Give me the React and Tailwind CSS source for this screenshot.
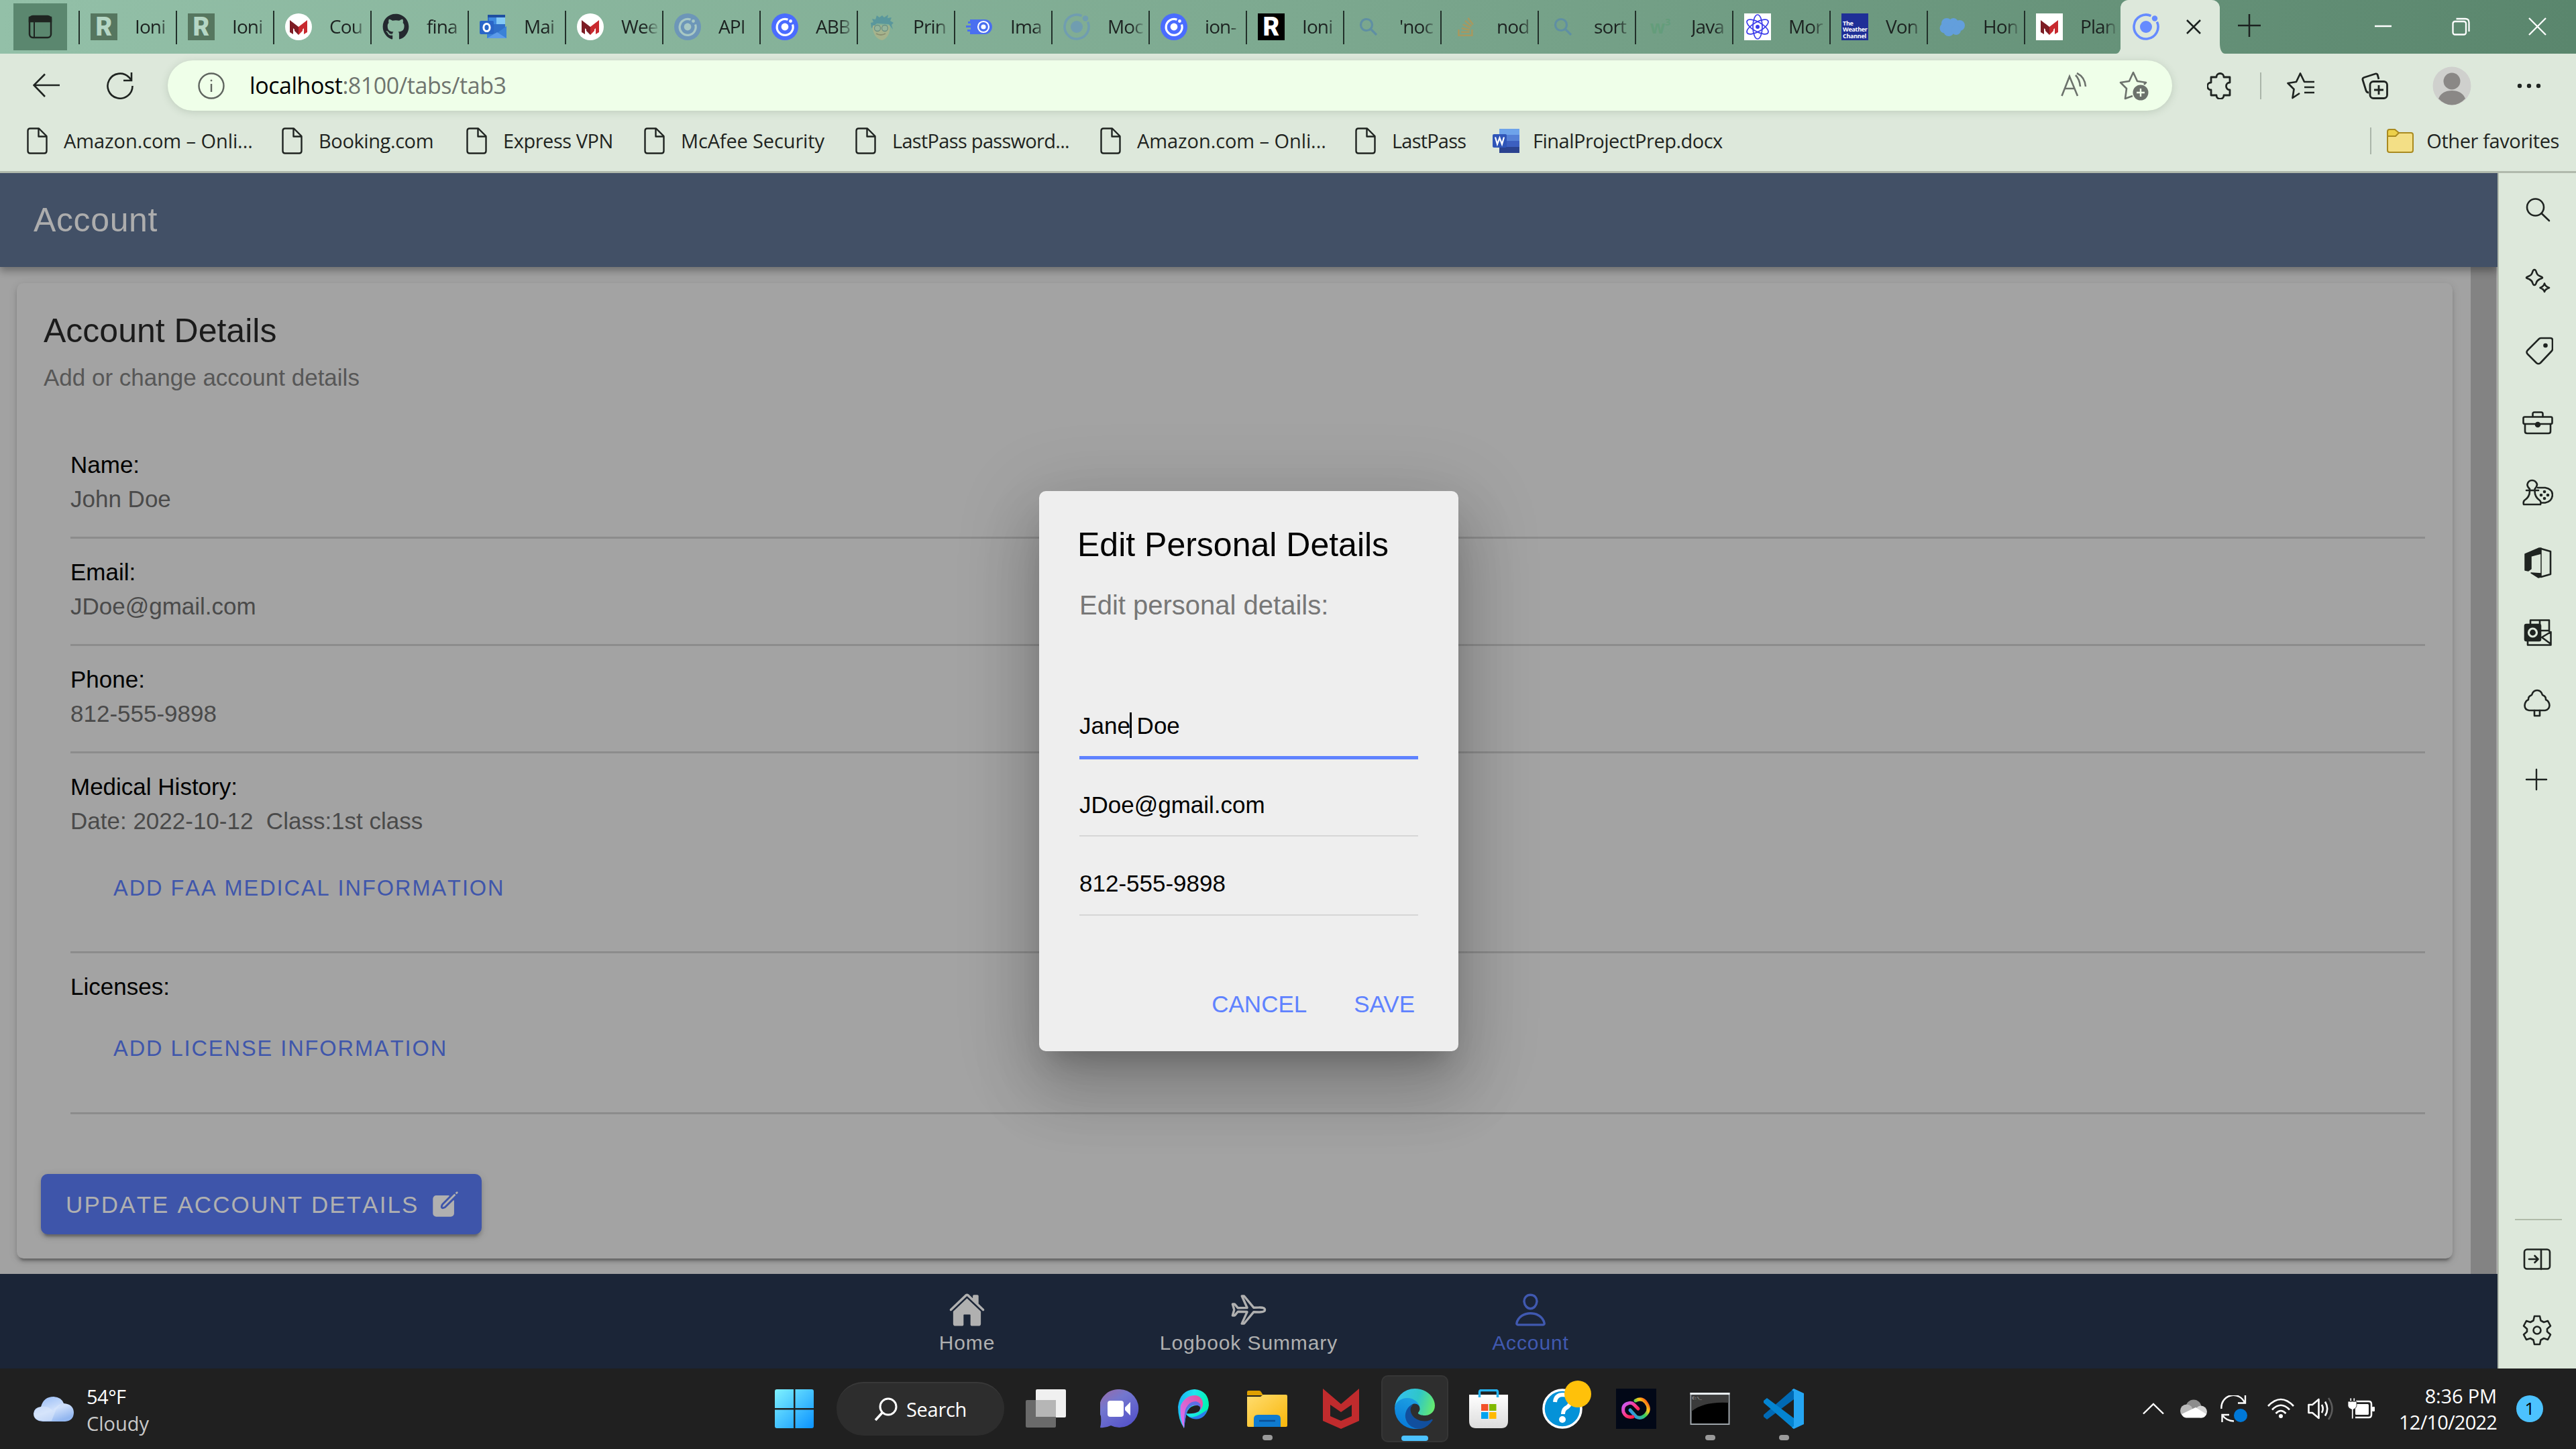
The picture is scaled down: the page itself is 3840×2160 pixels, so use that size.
import { IoHome, IoAirplaneOutline, IoPersonOutline, IoCreate } from "react-icons/io5";
import { FaGithub, FaStackOverflow } from "react-icons/fa";

const SEGOE = "font-['Open_Sans','Noto_Sans',sans-serif]";
const ARIAL = "font-['Liberation_Sans',Arial,sans-serif]";

/* ---------- tab favicons (40 × 40) ---------- */

function LetterR({ box, letter }) {
  return (
    <div className={`flex h-10 w-10 items-center justify-center font-['Roboto',sans-serif] text-[38px] leading-[40px] font-black ${box} ${letter}`}>
      <span className="block">R</span>
    </div>
  );
}

function McAfeeM() {
  return (
    <>
      <path d="M7 10 L20 20 V32 L14 26 V24 L12 22 V31 L7 28 Z" fill="#7d1c24" />
      <path d="M33 10 L20 20 V32 L26 26 V24 L28 22 V31 L33 28 Z" fill="#c8292f" />
    </>
  );
}

function McAfeeCircle() {
  return (
    <svg className="h-10 w-10" viewBox="0 0 40 40">
      <circle cx="20" cy="20" r="20" fill="#fff" />
      <McAfeeM />
    </svg>
  );
}

function McAfeeSquare() {
  return (
    <svg className="h-10 w-10" viewBox="0 0 40 40">
      <rect width="40" height="40" fill="#fff" />
      <McAfeeM />
    </svg>
  );
}

function OutlookFav() {
  return (
    <svg className="h-10 w-10" viewBox="0 0 40 40">
      <rect x="12" y="2" width="26" height="30" fill="#2f6fc9" />
      <rect x="12" y="2" width="26" height="4" fill="#1f4fa0" />
      <rect x="25" y="6" width="13" height="10" fill="#84c9f5" />
      <rect x="14" y="6" width="11" height="10" fill="#3f8ae0" />
      <path d="M40 19 V37 H11 V30 L25 30 Z" fill="#3b82d6" />
      <path d="M11 37 L26 28 L40 37 Z" fill="#5c9bea" />
      <rect x="0" y="11" width="21" height="20" rx="2" fill="#2a66c8" />
      <ellipse cx="10.5" cy="21" rx="4.6" ry="5.6" fill="none" stroke="#fff" strokeWidth="3" />
    </svg>
  );
}

function CapacitorFav({ base, mark }) {
  return (
    <svg className="h-10 w-10" viewBox="0 0 40 40">
      <circle cx="20" cy="20" r="20" fill={base} />
      <path d="M24.5 9.2 A12 12 0 1 0 31.5 16.5" fill="none" stroke={mark} strokeWidth="3.2" />
      <circle cx="20" cy="20" r="5.4" fill={mark} />
      <circle cx="28.5" cy="11.5" r="2.4" fill={mark} />
    </svg>
  );
}

function IonicFav({ color }) {
  return (
    <svg className="h-10 w-10" viewBox="0 0 40 40">
      <path d="M27.5 3.6 A18 18 0 1 0 36.4 12.5" fill="none" stroke={color} strokeWidth="3.6" />
      <circle cx="20" cy="20" r="9" fill={color} />
      <circle cx="33" cy="7.5" r="4.2" fill={color} />
    </svg>
  );
}

function HeadFav() {
  return (
    <svg className="h-10 w-10" viewBox="0 0 40 40">
      <path d="M4 22 L3 14 L7 13 L5 8 L10 9 L12 3 L16 6 L20 3 L23 6 L29 2 L28 7 L34 6 L32 11 L37 14 L34 17 L36 24 L30 16 L12 15 Z" fill="#5a979c" />
      <path d="M6 18 H31 C33 29 27 38 20 40 C12 39 5 30 6 18 Z" fill="#a5b38c" />
      <circle cx="13" cy="22" r="4.5" fill="#94b49c" stroke="#6a8f82" strokeWidth="1.3" />
      <circle cx="24" cy="22" r="4.5" fill="#94b49c" stroke="#6a8f82" strokeWidth="1.3" />
      <path d="M11 30 Q18 34 25 30" fill="none" stroke="#8a8f70" strokeWidth="2" />
    </svg>
  );
}

function IonicSpeedFav() {
  return (
    <svg className="h-10 w-10" viewBox="0 0 40 40">
      <path d="M6 9 H28 A11 11 0 0 1 28 31 H6 V27 H2 V24 H7 V21 H0 V18 H7 V15 H3 V12 H6 Z" fill="#4a6ff0" />
      <circle cx="26" cy="20" r="8" fill="none" stroke="#fff" strokeWidth="2.2" />
      <circle cx="26" cy="20" r="3.6" fill="#fff" />
    </svg>
  );
}

function SearchFav() {
  return (
    <svg className="h-10 w-10" viewBox="0 0 40 40" fill="none" stroke="#5f8fa3" strokeWidth="3.2">
      <circle cx="17" cy="17" r="8.5" />
      <path d="M23 23 L32 32" />
    </svg>
  );
}

function StackFav() {
  return (
    <div className="flex h-10 w-10 items-center justify-center">
      <FaStackOverflow className="h-8 w-8 text-[#a8985f]" />
    </div>
  );
}

function W3Fav() {
  return (
    <div className="flex h-10 w-10 items-center justify-center font-['Open_Sans',sans-serif] text-[26px] font-bold text-[#649d7b]">
      w<sup className="text-[14px]">3</sup>
    </div>
  );
}

function AtomFav() {
  return (
    <svg className="h-10 w-10" viewBox="0 0 40 40" fill="none" stroke="#3b3bea" strokeWidth="1.7">
      <rect width="40" height="40" fill="#fff" stroke="none" />
      <ellipse cx="20" cy="20" rx="18" ry="7" transform="rotate(30 20 20)" />
      <ellipse cx="20" cy="20" rx="18" ry="7" transform="rotate(90 20 20)" />
      <ellipse cx="20" cy="20" rx="18" ry="7" transform="rotate(150 20 20)" />
      <circle cx="20" cy="20" r="3" fill="#3b3bea" stroke="none" />
    </svg>
  );
}

function WeatherFav() {
  return (
    <div className="flex h-10 w-10 flex-col justify-end bg-[#1f2f97] pb-[2px] pl-[2px] font-['Open_Sans',sans-serif] text-[9px] leading-[9.5px] font-bold tracking-[-0.3px] text-white">
      <span>The</span>
      <span>Weather</span>
      <span>Channel</span>
    </div>
  );
}

function CloudFav() {
  return (
    <svg className="h-10 w-10" viewBox="0 0 40 40" fill="#639fdc">
      <circle cx="12" cy="15" r="8" />
      <circle cx="22" cy="14" r="7" />
      <circle cx="31" cy="18" r="8" />
      <circle cx="9" cy="22" r="7.5" />
      <circle cx="15" cy="26" r="8" />
      <circle cx="26" cy="25" r="7" />
    </svg>
  );
}

const TABS = [
  { label: "Ioni", icon: <LetterR box="bg-[#56765f]" letter="text-[#b5d6c4]" /> },
  { label: "Ioni", icon: <LetterR box="bg-[#56765f]" letter="text-[#b5d6c4]" /> },
  { label: "Cou", icon: <McAfeeCircle /> },
  { label: "fina", icon: <FaGithub className="h-10 w-10 text-[#24292f]" /> },
  { label: "Mai", icon: <OutlookFav /> },
  { label: "Wee", icon: <McAfeeCircle /> },
  { label: "API", icon: <CapacitorFav base="#6d96b8" mark="#a8c8c4" /> },
  { label: "ABB", icon: <CapacitorFav base="#4a6cff" mark="#fff" /> },
  { label: "Prin", icon: <HeadFav /> },
  { label: "Ima", icon: <IonicSpeedFav /> },
  { label: "Moc", icon: <IonicFav color="#709db0" /> },
  { label: "ion-", icon: <CapacitorFav base="#4a6cff" mark="#fff" /> },
  { label: "Ioni", icon: <LetterR box="bg-black" letter="text-white" /> },
  { label: "'noc", icon: <SearchFav /> },
  { label: "nod", icon: <StackFav /> },
  { label: "sort", icon: <SearchFav /> },
  { label: "Java", icon: <W3Fav /> },
  { label: "Mor", icon: <AtomFav /> },
  { label: "Von", icon: <WeatherFav /> },
  { label: "Hon", icon: <CloudFav /> },
  { label: "Plan", icon: <McAfeeSquare /> },
];

function TabStrip() {
  return (
    <div className={`flex h-20 bg-linear-to-r from-[#93c0a8] via-[#7da990] to-[#5a866d] ${SEGOE}`}>
      <div className="mt-[5px] ml-5 flex h-[70px] w-20 shrink-0 items-center justify-center bg-[#5b876f]">
        <svg className="h-10 w-10" viewBox="0 0 40 40" fill="none" stroke="#1f2421" strokeWidth="2.5">
          <rect x="4" y="4" width="32" height="32" rx="5" />
          <path d="M4 6 H36 V12 H4 Z" fill="#1f2421" />
          <path d="M11 12 V36" strokeWidth="2" />
        </svg>
      </div>
      <div className="ml-[17px] flex">
        {TABS.map((t, i) => (
          <div key={i} className="flex w-[145px] shrink-0">
            <div className="mt-4 h-[50px] w-[2px] shrink-0 bg-[#22302a]" />
            <div className="mt-5 ml-4 h-10 w-10 shrink-0">{t.icon}</div>
            <div className="ml-[26px] h-20 w-[59px] text-[28px] leading-[78px] tracking-[-0.9px] whitespace-nowrap text-[#1c2220] [mask-image:linear-gradient(to_right,black_60%,rgba(0,0,0,0.15)_92%)]">
              {t.label}
            </div>
          </div>
        ))}
      </div>
      <div className="-ml-2 flex">
        <svg className="h-20 w-2" viewBox="0 0 8 80">
          <path d="M8 64 V80 H0 C5 80 8 74 8 64 Z" fill="#dde8db" />
        </svg>
        <div className="-ml-px flex h-20 w-[148px] items-center rounded-t-[12px] bg-[#dde8db]">
          <div className="ml-[18px] h-10 w-10">
            <IonicFav color="#668bff" />
          </div>
          <svg className="ml-[39px] h-6 w-6" viewBox="0 0 24 24" stroke="#1c2220" strokeWidth="2.5">
            <path d="M2 2 L22 22 M22 2 L2 22" />
          </svg>
        </div>
        <svg className="h-20 w-2" viewBox="0 0 8 80">
          <path d="M0 64 V80 H8 C3 80 0 74 0 64 Z" fill="#dde8db" />
        </svg>
      </div>
      <svg className="mt-5 ml-[18px] h-9 w-9" viewBox="0 0 36 36" stroke="#1c2220" strokeWidth="2.5">
        <path d="M18 1 V35 M1 18 H35" />
      </svg>
      <div className="mt-[26px] mr-[44px] ml-auto flex">
        <svg className="h-[27px] w-[27px]" viewBox="0 0 27 27" stroke="#fff" strokeWidth="2.5">
          <path d="M0 13 H25" />
        </svg>
        <svg className="ml-[88px] h-[27px] w-[27px]" viewBox="0 0 27 27" fill="none" stroke="#fff" strokeWidth="2.3">
          <rect x="1.5" y="6" width="19.5" height="19.5" rx="3" />
          <path d="M6.5 2 H20 Q25.5 2 25.5 7.5 V21" />
        </svg>
        <svg className="ml-[87px] h-[27px] w-[27px]" viewBox="0 0 27 27" stroke="#fff" strokeWidth="2.3">
          <path d="M1 1 L26 26 M26 1 L1 26" />
        </svg>
      </div>
    </div>
  );
}

/* ---------- address bar and favourites ---------- */

function AddressRow() {
  return (
    <div className={`flex h-[95px] items-center ${SEGOE}`}>
      <svg className="ml-[49px] h-10 w-10" viewBox="0 0 40 40" fill="none" stroke="#1f2421" strokeWidth="2.6">
        <path d="M18 2.5 L1.5 19 L18 36 M1.5 19 H40" />
      </svg>
      <svg className="ml-[70px] h-10 w-10" viewBox="0 0 40 40" fill="none" stroke="#1f2421" strokeWidth="2.6">
        <path d="M38.5 20 A18.5 18.5 0 1 1 33 7 L37 11.5 M37 0 V12 H25" />
      </svg>
      <div className="ml-[51px] flex h-[75px] w-[2988px] items-center rounded-full bg-[#efffe9] shadow-[0_2px_12px_rgba(80,110,80,0.22)]">
        <svg className="ml-[45px] h-10 w-10" viewBox="0 0 40 40" fill="none" stroke="#5f655f" strokeWidth="2.4">
          <circle cx="20" cy="20" r="18.5" />
          <path d="M20 17 V29" />
          <circle cx="20" cy="12" r="1" fill="#5f655f" strokeWidth="1" />
        </svg>
        <div className="ml-[37px] text-[34px] leading-[75px] tracking-[-0.45px] text-[#6f756f]">
          <span className="text-black">localhost</span>:8100/tabs/tab3
        </div>
        <svg className="ml-auto h-10 w-10" viewBox="0 0 40 40" fill="none" stroke="#6c726c" strokeWidth="2.6">
          <path d="M1.500 35 L13 6 L25 35 M6 24 H20" />
          <path d="M22 4 Q28 10 29 21 M24 1 Q36 7 37 21" />
        </svg>
        <svg className="mr-[34px] ml-[47px] h-11 w-[45px]" viewBox="0 0 45 44" fill="none" stroke="#6c726c" strokeWidth="2.6">
          <path d="M20 37 L9 41 L11 26 L2 17 L15 15 L21 2 L27 15 L40 17 L37 20" strokeLinejoin="round" />
          <circle cx="32" cy="32" r="11.500" fill="#6c726c" stroke="none" />
          <path d="M32 26 V38 M26 32 H38" stroke="#efffe9" strokeWidth="2.4" />
        </svg>
      </div>
      <svg className="ml-[52px] h-10 w-10" viewBox="0 0 40 40" fill="none" stroke="#1f2421" strokeWidth="2.8" strokeLinejoin="round">
        <path d="M14 7 A5.500 5.500 0 0 1 25 7 H34 V15 A5.500 5.500 0 0 0 34 26 V34 H25 A5.500 5.500 0 0 1 14 34 H6 V26 A5.500 5.500 0 0 1 6 15 V7 Z" />
      </svg>
      <div className="ml-[39px] h-10 w-[2px] bg-[#aab5a9]" />
      <svg className="ml-[38px] h-10 w-[42px]" viewBox="0 0 42 40" fill="none" stroke="#1f2421" strokeWidth="2.7" strokeLinejoin="round">
        <path d="M19 31 L8.500 38 L10.500 25 L1.500 16 L14 14 L20 1.500 L26 14 H41 M26 22 H41 M26 30 H41" />
      </svg>
      <svg className="ml-[69px] h-10 w-10" viewBox="0 0 40 40" fill="none" stroke="#1f2421" strokeWidth="2.8" strokeLinejoin="round">
        <path d="M26 10 L24 3 Q23 1.500 21 2 L4 7.500 Q1.500 8.500 2 11 L7 27 Q8 30 11 30" />
        <rect x="13" y="13.500" width="25.500" height="25" rx="5" />
        <path d="M26 19 V33 M19 26 H33" />
      </svg>
      <svg className="ml-[66px] h-[58px] w-[58px]" viewBox="0 0 58 58">
        <circle cx="29" cy="29" r="28.500" fill="#cfd0cd" />
        <circle cx="29" cy="22" r="12.500" fill="#8a8886" />
        <path d="M9 48 Q14 36 29 36 Q44 36 49 48 Q40 57.500 29 57.500 Q18 57.500 9 48 Z" fill="#8a8886" />
      </svg>
      <svg className="ml-[66px] h-10 w-10" viewBox="0 0 40 40" fill="#1f2421">
        <circle cx="6" cy="20" r="3.200" />
        <circle cx="20" cy="20" r="3.200" />
        <circle cx="34" cy="20" r="3.200" />
      </svg>
    </div>
  );
}

const BOOKMARKS = [
  ["Amazon.com – Onli...", "w-[380px] tracking-[-0.08px]"],
  ["Booking.com", "w-[275px] tracking-[-0.4px]"],
  ["Express VPN", "w-[265px] tracking-[-0.45px]"],
  ["McAfee Security", "w-[315px] tracking-[-0.15px]"],
  ["LastPass password...", "w-[365px] tracking-[-0.7px]"],
  ["Amazon.com – Onli...", "w-[380px] tracking-[-0.08px]"],
  ["LastPass", "w-[205px] tracking-[-0.8px]"],
];

function DocIcon() {
  return (
    <svg className="h-10 w-8" viewBox="0 0 32 40" fill="none" stroke="#1f2421" strokeWidth="2.4" strokeLinejoin="round">
      <path d="M5 1.500 H18 L29.500 13 V35 Q29.500 38.500 26 38.500 H5 Q1.500 38.500 1.500 35 V5 Q1.500 1.500 5 1.500 Z" />
      <path d="M17.500 2 V13.500 H29" />
    </svg>
  );
}

function FavouritesRow() {
  return (
    <div className={`flex h-[83px] border-b-[3px] border-[#b0b9ac] pb-[10px] pl-10 text-[29px] leading-[68px] text-[#1f2421] ${SEGOE}`}>
      {BOOKMARKS.map(([label, cls], i) => (
        <div key={i} className={`flex shrink-0 items-center whitespace-nowrap ${cls}`}>
          <DocIcon />
          <span className="ml-[23px]">{label}</span>
        </div>
      ))}
      <div className="flex items-center tracking-[-0.5px]">
        <svg className="h-10 w-10" viewBox="0 0 40 40">
          <rect x="10" y="2" width="30" height="9" fill="#6ea3ea" />
          <rect x="10" y="11" width="30" height="9" fill="#5580d6" />
          <rect x="10" y="20" width="30" height="9" fill="#3c5fc0" />
          <rect x="10" y="29" width="30" height="9" fill="#2a428f" />
          <rect x="0" y="10" width="21" height="20" rx="2" fill="#2f55b8" />
          <path d="M4 14.500 L7 25 L10.500 15.500 L14 25 L17 14.500" fill="none" stroke="#fff" strokeWidth="2.200" />
        </svg>
        <span className="ml-[20px]">FinalProjectPrep.docx</span>
      </div>
      <div className="mr-[25px] ml-auto flex items-center tracking-[-0.4px]">
        <div className="h-10 w-[2px] bg-[#aab5a9]" />
        <svg className="ml-[22px] h-10 w-[42px]" viewBox="0 0 42 40" stroke="#a98a1f" strokeWidth="2">
          <path d="M2 8 H37 Q40 8 40 11 V34 Q40 37 37 37 H5 Q2 37 2 34 Z" fill="#f3df86" />
          <path d="M2 6 Q2 3 5 3 H13 L19 8 L14 13 H2 Z" fill="#ecd04a" />
        </svg>
        <span className="ml-[18px]">Other favorites</span>
      </div>
    </div>
  );
}

/* ---------- account page ---------- */

const FIELDS = [
  ["Name:", "John Doe"],
  ["Email:", "JDoe@gmail.com"],
  ["Phone:", "812-555-9898"],
];

function AccountCard() {
  return (
    <div className="mt-6 ml-[25px] h-[1454px] w-[3631px] shrink-0 rounded-[10px] bg-[#a3a3a3] pt-[41px] shadow-[0_8px_3px_-5px_rgba(0,0,0,0.2),0_5px_5px_rgba(0,0,0,0.14),0_3px_13px_rgba(0,0,0,0.12)]">
      <div className="ml-10 text-[50px] leading-[60px] text-[#1b1b1b]">Account Details</div>
      <div className="mt-[19px] ml-10 text-[35px] leading-[42px] text-[#575757]">Add or change account details</div>
      <div className="mt-[59px] ml-20 w-[3510px] text-[35px] leading-[51px]">
        {FIELDS.map(([label, value]) => (
          <div key={label} className="h-40 border-b-[3px] border-[#8c8c8c] pt-6">
            <div className="text-black">{label}</div>
            <div className="text-[#4a4a4a]">{value}</div>
          </div>
        ))}
        <div className="h-[298px] border-b-[3px] border-[#8c8c8c] pt-6">
          <div className="text-black">Medical History:</div>
          <div className="whitespace-pre text-[#4a4a4a]">{"Date: 2022-10-12  Class:1st class"}</div>
          <div className="mt-[55px] ml-[64px] text-[32.5px] leading-10 tracking-[0.06em] text-[#3f56ab] [font-kerning:none]">ADD FAA MEDICAL INFORMATION</div>
        </div>
        <div className="h-60 border-b-[3px] border-[#8c8c8c] pt-6">
          <div className="text-black">Licenses:</div>
          <div className="mt-[47px] ml-[64px] text-[32.5px] leading-10 tracking-[0.06em] text-[#3f56ab] [font-kerning:none]">ADD LICENSE INFORMATION</div>
        </div>
      </div>
      <div className="mt-[89px] ml-9 flex h-[90px] w-[657px] items-center rounded-[10px] bg-[#3e55aa] text-[35px] leading-[91px] tracking-[0.06em] text-[#b0b0b0] shadow-[0_8px_3px_-5px_rgba(0,0,0,0.2),0_5px_5px_rgba(0,0,0,0.14),0_3px_13px_rgba(0,0,0,0.12)]">
        <span className="ml-[37px] whitespace-nowrap [font-kerning:none]">UPDATE ACCOUNT DETAILS</span>
        <IoCreate className="ml-[16px] h-[46px] w-[46px]" />
      </div>
    </div>
  );
}

function EditDialog() {
  return (
    <div className="absolute top-[474px] left-[1549px] flex h-[835px] w-[625px] flex-col rounded-[10px] bg-[#eeeeee] pl-[57px] text-[35px] text-black shadow-[0_28px_38px_-18px_rgba(0,0,0,0.2),0_60px_95px_8px_rgba(0,0,0,0.14),0_22px_115px_20px_rgba(0,0,0,0.12)]">
      <div className="mt-[50px] text-[50px] leading-[60px]">Edit Personal Details</div>
      <div className="mt-[35px] ml-[3px] text-[40px] leading-[50px] text-[#777777]">Edit personal details:</div>
      <div className="mt-[102px] ml-[3px] w-[505px]">
        <div className="relative h-[103px] border-b-[5px] border-[#5f82ff] pt-[33px] leading-10">
          Jane Doe
          <div className="absolute top-[33px] left-[75px] h-[38px] w-[3px] bg-black" />
        </div>
        <div className="h-[115px] border-b-2 border-[#d6d6d6] pt-[48px] leading-10">JDoe@gmail.com</div>
        <div className="h-[118px] border-b-2 border-[#d6d6d6] pt-[50px] leading-10">812-555-9898</div>
      </div>
      <div className="mt-[112px] mr-[65px] flex justify-end gap-[70px] leading-10 text-[#5f82ff]">
        <span>CANCEL</span>
        <span>SAVE</span>
      </div>
    </div>
  );
}

function AppTabBar() {
  return (
    <div className="relative flex h-[141px] justify-center bg-[#1b2537] text-[30px] leading-9 tracking-[0.03em] text-[#b0b0b0]">
      <div className="flex w-[420px] flex-col items-center pt-[26px]">
        <IoHome className="h-[55px] w-[55px]" />
        <span className="mt-[4px]">Home</span>
      </div>
      <div className="flex w-[420px] flex-col items-center pt-[26px]">
        <IoAirplaneOutline className="h-[55px] w-[55px]" />
        <span className="mt-[4px]">Logbook Summary</span>
      </div>
      <div className="flex w-[420px] flex-col items-center pt-[26px] text-[#4059b0]">
        <IoPersonOutline className="h-[55px] w-[55px]" />
        <span className="mt-[4px]">Account</span>
      </div>
    </div>
  );
}

function AccountApp() {
  return (
    <div className={`relative flex w-[3723px] shrink-0 flex-col overflow-hidden bg-[#a2a2a2] ${ARIAL}`}>
      <div className="relative z-10 h-[140px] shrink-0 bg-[#425066] pl-[50px] text-[50px] leading-[140px] tracking-[0.0125em] text-[#adadad] shadow-[0_5px_10px_rgba(0,0,0,0.25),0_10px_12px_rgba(0,0,0,0.08)]">
        Account
      </div>
      <div className="flex h-[1501px]">
        <AccountCard />
        <div className="mr-[2px] ml-auto w-[38px] bg-[#838383]" />
      </div>
      <AppTabBar />
      <EditDialog />
    </div>
  );
}

/* ---------- browser sidebar ---------- */

function SideIcon({ gap, h, w = 46, children }) {
  return (
    <svg
      className="shrink-0"
      style={{ marginTop: gap, height: h, width: w }}
      viewBox={`0 0 ${w} ${h}`}
      fill="none"
      stroke="#1f2421"
      strokeWidth="2.6"
      strokeLinejoin="round"
      strokeLinecap="round"
    >
      {children}
    </svg>
  );
}

function Sidebar() {
  return (
    <div className="flex flex-1 flex-col border-l-2 border-[#b3bcae] bg-[#dde8db] pl-[35px]">
      <SideIcon gap={37} h={36}>
        <circle cx="19.500" cy="14" r="12.500" />
        <path d="M28.500 23 L40 34" />
      </SideIcon>
      <SideIcon gap={69} h={38}>
        <path d="M18 2 Q20 2 21 6 Q22 10 26 11.500 Q30 13 30 14 Q30 15 26 16 Q22 18 21 21 Q20 25 18 25 Q16 25 15 21 Q14 18 10 16 Q6 15 6 14 Q6 13 10 11.500 Q14 10 15 6 Q16 2 18 2 Z" />
        <path d="M33 22.500 Q34 27 40 29 Q34 31 33 35 Q32 31 26.500 29 Q32 27 33 22.500 Z" />
      </SideIcon>
      <SideIcon gap={63} h={44}>
        <path d="M25 4 Q26 3 28 3 H42 Q45 3 45 6 V19 Q45 21 43.500 22.500 L27 40 Q24 42.500 21 40 L8 27 Q5 24 8 21 Z" />
        <circle cx="34.500" cy="14" r="2" fill="#1f2421" />
      </SideIcon>
      <SideIcon gap={68} h={36}>
        <rect x="1.500" y="8.500" width="43" height="10.500" rx="2" />
        <path d="M4 19 V30 Q4 33 7 33 H39 Q42 33 42 30 V19 M15.500 8 V4 Q15.500 1.500 18 1.500 H28 Q30.500 1.500 30.500 4 V8" />
        <circle cx="23" cy="20" r="3" fill="#1f2421" />
      </SideIcon>
      <SideIcon gap={65} h={40}>
        <path d="M11 15 Q7 11 7.500 8 Q9 2 14.500 2 Q20 2 22 8 Q22 11 18.500 15 M6 17 H24 M11 18 Q11 27 3 32 Q1 34 2 38 H27 Q28.500 34 26 32 Q18.500 27 18.500 18" />
        <path d="M23 13 H34 Q45 15 45 24 Q44 34 34 35.500 H29" />
        <g fill="#1f2421" stroke="none">
          <circle cx="33" cy="19" r="2.300" />
          <circle cx="28" cy="24" r="2.300" />
          <circle cx="38" cy="24" r="2.300" />
          <circle cx="33" cy="29" r="2.300" />
        </g>
      </SideIcon>
      <SideIcon gap={61} h={48}>
        <path d="M25 2 L4 11 V35 L9 36 L13 33 V14 L28 10 V40 L13 39 L24 46 L28 45 V2 Z" fill="#1f2421" strokeWidth="1.500" />
        <path d="M28 3 L42 7 V41 L28 45" />
      </SideIcon>
      <SideIcon gap={59} h={42}>
        <path d="M12 9 V2.500 H40 V19 M8 33 V39.500 H42.500 V20 L29 28 L42.500 38 M27 18 H40 M26 3 V9" />
        <rect x="4" y="9" width="23" height="24" rx="2" fill="#1f2421" />
        <circle cx="15.500" cy="21" r="6" stroke="#dde8db" strokeWidth="3.200" />
      </SideIcon>
      <SideIcon gap={63} h={42}>
        <path d="M10 32 Q3.500 31 3.500 24.500 Q4 18 9 16 Q8.500 11 14 9 Q16 2 22 2 Q28 2 30 9 Q35.500 11 35 16 Q40 18 40.500 24.500 Q40 31 34 32 Z" />
        <path d="M18 32 V40 H26 V32" />
      </SideIcon>
      <SideIcon gap={76} h={34}>
        <path d="M21 2 V32 M6 17 H36" strokeWidth="2.400" />
      </SideIcon>
      <div className="mt-auto -ml-[11px] h-[2px] w-[70px] bg-[#b0bba9]" />
      <SideIcon gap={42} h={34}>
        <rect x="3" y="1.500" width="38" height="29" rx="4" />
        <path d="M28 2 V31 M10 16 H23 M18.500 11 L23.500 16 L18.500 21" />
      </SideIcon>
      <SideIcon gap={64} h={48}>
        <path
          transform="translate(-2 0)"
          d="M20 3 H28 L29.500 9.500 L34 12 L40 10 L44 17.500 L39 22 V26 L44 30.500 L40 38 L34 36 L29.500 38.500 L28 45 H20 L18.500 38.500 L14 36 L8 38 L4 30.500 L9 26 V22 L4 17.500 L8 10 L14 12 L18.500 9.500 Z"
        />
        <circle cx="22" cy="24" r="5.500" />
      </SideIcon>
      <div className="h-[33px] shrink-0" />
    </div>
  );
}

/* ---------- taskbar ---------- */

function Slot({ children, dot, active }) {
  return (
    <div className="flex w-[110px] justify-center">
      <div className={active ? "relative flex h-[100px] w-[100px] items-center justify-center rounded-[10px] border-2 border-[#363636] bg-[#2e2e2e]" : "relative flex h-[100px] w-[100px] items-center justify-center"}>
        {children}
        {active && <div className="absolute bottom-0 left-7 h-2 w-10 rounded-full bg-[#4cc2ff]" />}
        {dot && <div className="absolute bottom-[3px] left-[43px] h-2 w-[15px] rounded-full bg-[#9a9a9a]" />}
      </div>
    </div>
  );
}

function Defs() {
  return (
    <svg className="absolute h-0 w-0">
      <defs>
        <linearGradient id="win" x1="0" y1="0" x2="58" y2="58" gradientUnits="userSpaceOnUse">
          <stop offset="0" stopColor="#7ff2ff" />
          <stop offset="1" stopColor="#0b93ff" />
        </linearGradient>
        <linearGradient id="chat" x1="0" y1="0" x2="0.700" y2="1">
          <stop offset="0" stopColor="#9a6aa5" />
          <stop offset="0.400" stopColor="#7377cf" />
          <stop offset="1" stopColor="#5553c9" />
        </linearGradient>
        <linearGradient id="folder" x1="0" y1="0" x2="1" y2="1">
          <stop offset="0" stopColor="#ffdd70" />
          <stop offset="1" stopColor="#f9b60a" />
        </linearGradient>
        <linearGradient id="edgeTop" x1="0" y1="0.400" x2="1" y2="0.600">
          <stop offset="0" stopColor="#35c1f1" />
          <stop offset="0.550" stopColor="#2fc6c9" />
          <stop offset="1" stopColor="#66eb6e" />
        </linearGradient>
        <linearGradient id="edgeMid" x1="0.600" y1="0.100" x2="0.300" y2="1">
          <stop offset="0" stopColor="#1b9de2" />
          <stop offset="1" stopColor="#0678d7" />
        </linearGradient>
        <linearGradient id="peOut" x1="0" y1="0" x2="1" y2="0.300">
          <stop offset="0" stopColor="#1aa7f5" />
          <stop offset="0.500" stopColor="#1fe6ee" />
          <stop offset="1" stopColor="#00f5b0" />
        </linearGradient>
        <linearGradient id="peIn" x1="0" y1="1" x2="1" y2="0">
          <stop offset="0" stopColor="#d673ff" />
          <stop offset="1" stopColor="#e0559c" />
        </linearGradient>
        <linearGradient id="ccL" x1="0" y1="0" x2="1" y2="1">
          <stop offset="0" stopColor="#c55cff" />
          <stop offset="0.500" stopColor="#ff3a8a" />
          <stop offset="1" stopColor="#ff1020" />
        </linearGradient>
        <linearGradient id="ccR" x1="0" y1="0.800" x2="1" y2="0">
          <stop offset="0" stopColor="#2f8bff" />
          <stop offset="0.450" stopColor="#35d05a" />
          <stop offset="0.700" stopColor="#ffc61a" />
          <stop offset="1" stopColor="#ff2a10" />
        </linearGradient>
        <linearGradient id="cloud" x1="0" y1="0" x2="0.600" y2="1">
          <stop offset="0" stopColor="#8fb6f5" />
          <stop offset="0.600" stopColor="#cfe0fb" />
          <stop offset="1" stopColor="#93b7f0" />
        </linearGradient>
        <linearGradient id="store" x1="0" y1="0" x2="0" y2="1">
          <stop offset="0" stopColor="#ffffff" />
          <stop offset="1" stopColor="#dcdcdc" />
        </linearGradient>
      </defs>
    </svg>
  );
}

function Taskbar() {
  return (
    <div className={`relative flex h-[120px] bg-[#202020] text-white ${SEGOE}`}>
      <Defs />
      <div className="flex w-[1129px] shrink-0 items-center">
        <svg className="ml-[49px] h-[40px] w-[62px]" viewBox="0 0 62 40">
          <path d="M15 39 Q1 38 1 27 Q2 18 12 17 Q16 2 31 2 Q43 3 46 12 Q60 13 61 25 Q61 38 48 39 Z" fill="url(#cloud)" />
          <path d="M12 17 Q22 15 30 23 Q36 13 46 12 Q36 16 33 25 L28 38 H15 Q2 37 2 27 Q3 19 12 17 Z" fill="#dbe7fb" opacity="0.550" />
        </svg>
        <div className="mt-[3px] ml-[18px] text-[29px] leading-[40px]">
          <div className="tracking-[-0.5px]">54°F</div>
          <div className="text-[#c9c9c9]">Cloudy</div>
        </div>
      </div>
      <div className="flex items-center">
        <Slot>
          <svg className="h-[58px] w-[58px]" viewBox="0 0 58 58" fill="url(#win)">
            <path d="M3 0 H28 V28 H0 V3 Q0 0 3 0 Z M30.500 0 H55 Q58 0 58 3 V28 H30.500 Z M0 30.500 H28 V58 H3 Q0 58 0 55 Z M30.500 30.500 H58 V55 Q58 58 55 58 H30.500 Z" />
          </svg>
        </Slot>
        <div className="mr-[7px] ml-2 flex h-20 w-[250px] items-center rounded-full border-t-2 border-[#393939] bg-[#2d2d2d]">
          <svg className="ml-[56px] h-9 w-9" viewBox="0 0 36 36" fill="none" stroke="#fff" strokeWidth="3">
            <circle cx="21" cy="14" r="12" />
            <path d="M12.500 22.500 L2 34" strokeWidth="3.500" />
          </svg>
          <span className="ml-[12px] text-[29px] leading-[76px] tracking-[-0.3px]">Search</span>
        </div>
        <Slot>
          <svg className="h-[58px] w-[60px]" viewBox="0 0 60 58">
            <rect x="15" y="0" width="45" height="42" rx="2" fill="#f0f0f0" />
            <rect x="0" y="16" width="45" height="41" rx="2" fill="#6a6a6a" />
            <rect x="15" y="16" width="30" height="25" fill="#b6b6b6" />
          </svg>
        </Slot>
        <Slot>
          <svg className="h-[58px] w-[58px]" viewBox="0 0 58 58">
            <path d="M28 0 A28.500 28.500 0 1 1 16 54 Q8 58 0 57 Q2 50 1 40 A28.500 28.500 0 0 1 28 0 Z" fill="url(#chat)" />
            <rect x="11" y="17" width="24" height="24" rx="4" fill="#fff" />
            <path d="M37 27 L45 19 V39 L37 31 Z" fill="#fff" />
          </svg>
        </Slot>
        <Slot>
          <svg className="h-[58px] w-[46px]" viewBox="0 0 46 58">
            <path d="M9 58 Q0 45 0 26 Q3 1 25 0 Q46 2 46 24 Q43 43 26 44 Q16 43 12 37 Z" fill="url(#peOut)" />
            <path d="M11 36 Q18 46 32 38 Q42 32 44 30 Q40 44 27 44.500 Q17 44 11 36 Z" fill="#2b7cec" />
            <path d="M9 58 Q2 42 4 24 Q11 9 26 9 Q38 11 37 24 Q33 36 22 36 Q30 32 30 26 Q22 20 13 30 Q10 42 9 58 Z" fill="url(#peIn)" />
            <path d="M9 58 Q9 34 12 28 Q17 18 27 18 Q35 20 34 28 Q31 36 22 36 Q32 31 30 25 Q22 20 14 31 Q11 42 9 58 Z" fill="#5b6fe6" />
            <path d="M13 36 Q16 24 29 24 Q36 26 31 33 Q24 37 13 36 Z" fill="#202020" />
          </svg>
        </Slot>
        <Slot dot>
          <svg className="h-[54px] w-[60px]" viewBox="0 0 60 54">
            <path d="M0 2 Q0 0 2 0 H18 Q20 0 21 2 L24 7 H0 Z" fill="#dfa000" />
            <path d="M0 9 H20 L24 6 H58 Q60 6 60 8 V52 Q60 54 58 54 H2 Q0 54 0 52 Z" fill="url(#folder)" />
            <path d="M10 54 V42 Q10 36 16 36 H44 Q50 36 50 42 V54 Z" fill="#0f7bd0" />
            <path d="M18 45 H42" stroke="#0a4f96" strokeWidth="2.500" />
          </svg>
        </Slot>
        <Slot>
          <svg className="h-[60px] w-[54px]" viewBox="0 0 54 60">
            <path d="M0 0 L27 23 L54 0 V48 L27 60 L0 48 Z M11 24 V41 L27 48 L43 41 V24 L27 35 Z" fill="#c02b2d" fillRule="evenodd" />
          </svg>
        </Slot>
        <Slot active>
          <svg className="h-[60px] w-[60px]" viewBox="0 0 256 256">
            <path d="M235.700 195.500a93.700 93.700 0 0 1-10.600 4.700 101.900 101.900 0 0 1-35.900 6.400c-47.300 0-88.500-32.500-88.500-74.300a31.500 31.500 0 0 1 16.400-27.300c-42.800 1.800-53.800 46.400-53.800 72.500 0 73.900 68.100 81.400 82.800 81.400 7.900 0 19.800-2.300 27-4.600l1.300-.4a128.300 128.300 0 0 0 66.600-52.800 4 4 0 0 0-5.300-5.600z" fill="#114f9e" />
            <path d="M105.700 241.400a79.200 79.200 0 0 1-22.700-21.300 80.700 80.700 0 0 1 29.500-120c3.200-1.500 8.500-4.100 15.600-4a32.400 32.400 0 0 1 25.700 13 31.900 31.900 0 0 1 6.300 18.700c0-.2 24.500-79.600-80-79.600-43.900 0-80 41.600-80 78.200a130.200 130.200 0 0 0 12.100 56 128 128 0 0 0 156.400 67.100 75.500 75.500 0 0 1-62.800-8.100z" fill="url(#edgeMid)" />
            <path d="M152.300 148.900c-.9 1-3.400 2.500-3.400 5.600 0 2.600 1.700 5.200 4.800 7.300 14.300 10 41.400 8.600 41.500 8.600a59.600 59.600 0 0 0 30.300-8.300 61.400 61.400 0 0 0 30.400-52.900c.3-22.400-8-37.300-11.300-43.900C223.500 23.900 177.700 0 128 0A128 128 0 0 0 0 126.200c.5-36.500 36.800-66 80-66 3.500 0 23.500.3 42 10a72.600 72.600 0 0 1 30.900 29.300c6.100 10.600 7.200 24.100 7.200 29.500s-2.700 13.300-7.800 19.900z" fill="url(#edgeTop)" />
          </svg>
        </Slot>
        <Slot>
          <svg className="h-[58px] w-[58px]" viewBox="0 0 58 58">
            <path d="M0 8 H58 V47 Q58 58 48 58 H10 Q0 58 0 47 Z" fill="url(#store)" />
            <path d="M15.500 12 V4 Q15.500 1.500 18 1.500 H40 Q42.500 1.500 42.500 4 V12" fill="none" stroke="#26b4f2" strokeWidth="3.500" />
            <rect x="18" y="22" width="10.500" height="10" fill="#f3522a" />
            <rect x="30" y="22" width="10.500" height="10" fill="#80b900" />
            <rect x="18" y="34" width="10.500" height="10" fill="#00a3ef" />
            <rect x="30" y="34" width="10.500" height="10" fill="#ffb900" />
          </svg>
        </Slot>
        <Slot>
          <svg className="h-[84px] w-[88px] shrink-0" viewBox="-14 -12 88 84">
            <circle cx="30" cy="30" r="28" fill="#0492d8" stroke="#fff" strokeWidth="3.500" />
            <path d="M19 20 Q20 9 31 9 Q43 10 42 20 Q41 26 35 29 Q31 32 31 38" fill="none" stroke="#fff" strokeWidth="6" />
            <circle cx="30" cy="46" r="5" fill="#fff" />
            <circle cx="53" cy="8" r="20" fill="#ffc10a" />
          </svg>
        </Slot>
        <Slot>
          <svg className="h-[60px] w-[60px]" viewBox="0 0 60 60" fill="none" strokeLinecap="round" strokeWidth="5">
            <rect width="60" height="60" fill="#020817" />
            <path d="M29 18 Q38 13 44 20 Q52 30 45 38 Q38 46 30 42 L21 32" stroke="url(#ccR)" />
            <path d="M25 42 Q15 44 11 35 Q9 24 18 22 Q23 20 27 24 L33 30" stroke="url(#ccL)" />
          </svg>
        </Slot>
        <Slot dot>
          <svg className="h-[48px] w-[60px]" viewBox="0 0 60 48">
            <rect x="0.500" y="0" width="59" height="48" fill="#9fa6ab" />
            <rect x="0.500" y="0" width="59" height="3" fill="#e8ecef" />
            <rect x="2.500" y="3.500" width="55" height="42.500" fill="#000" />
            <path d="M2.500 3.500 H57.500 V15 Q20 13 2.500 28 Z" fill="#3b3b3b" />
            <text x="3.500" y="10" fontSize="6" fill="#ddd" fontFamily="Liberation Mono">C:\_</text>
          </svg>
        </Slot>
        <Slot dot>
          <svg className="h-[60px] w-[60px]" viewBox="0 0 60 60">
            <path d="M45 0 L0 39 V42 L5 46 L45 16 Z" fill="#0069b4" />
            <path d="M5 14 L0 18 V21 L45 60 V44 Z" fill="#0484d1" />
            <path d="M45 0 L60 7 V53 L45 60 L42 58 L45 56 V4 L42 2 Z" fill="#25a5f2" />
          </svg>
        </Slot>
      </div>
      <div className="mr-[49px] ml-auto flex items-center">
        <svg className="h-5 w-10" viewBox="0 0 40 20" fill="none" stroke="#fff" strokeWidth="2.400">
          <path d="M5 17.500 L20 3 L35 17.500" />
        </svg>
        <svg className="ml-5 h-7 w-10" viewBox="0 0 40 28">
          <circle cx="20" cy="12" r="11.500" fill="#8d8d8d" />
          <circle cx="9.500" cy="17" r="9.500" fill="#b9b9b9" />
          <circle cx="31" cy="18.500" r="9" fill="#d6d6d6" />
          <path d="M2 22 L23 12 L39 22 Q37 27.500 31 27.500 H9 Q4 27 2 22 Z" fill="#fff" />
        </svg>
        <svg className="ml-5 h-10 w-10" viewBox="0 0 40 40" fill="none" stroke="#fff" strokeWidth="2.400">
          <path d="M1.500 20 A18 18 0 0 1 36 11 M37 0 V11.500 H26 M2.500 40 V29 H13 M3 30 Q9 38 20 38.500" />
          <circle cx="30" cy="30" r="10" fill="#0078d7" stroke="none" />
        </svg>
        <svg className="ml-[30px] h-8 w-10" viewBox="0 0 40 32" fill="none" stroke="#fff" strokeWidth="2.700">
          <path d="M1 12 Q20 -8 39 12 M7 17.500 Q20 4 33 17.500 M12.500 23 Q20 15 27.500 23" />
          <circle cx="20" cy="27" r="3" fill="#fff" stroke="none" />
        </svg>
        <svg className="ml-5 h-9 w-10" viewBox="0 0 40 36" fill="none" stroke="#fff" strokeWidth="2.600" strokeLinejoin="round">
          <path d="M1.500 12 H7 L16.500 4 V32 L7 24 H1.500 Z M21 12 Q24.500 18 21 24 M26 7.500 Q32.500 18 26 28.500" />
          <path d="M31 2 Q42 18 31 34" stroke="#5c5c5c" />
        </svg>
        <svg className="ml-5 h-9 w-10" viewBox="0 0 40 36">
          <path d="M12 7 H31 Q35 7 35 11 V27 Q35 31 31 31 H11" fill="none" stroke="#fff" strokeWidth="2.500" />
          <rect x="11" y="11" width="20" height="16" rx="1.500" fill="#fff" />
          <rect x="36" y="15" width="4" height="7" rx="1" fill="#fff" />
          <path d="M0 7 H13 V14 Q12 18 8 19 V33 H5.500 V19 Q1 18 0 14 Z M3 2 H5.500 V7 H3 Z M8 2 H10.500 V7 H8 Z" fill="#fff" stroke="#202020" strokeWidth="0.800" />
        </svg>
        <div className="flex w-[182px] flex-col items-end text-[29px] leading-[39px]">
          <div className="tracking-[-0.15px]">8:36 PM</div>
          <div className="tracking-[-0.8px]">12/10/2022</div>
        </div>
        <div className="ml-[29px] h-10 w-10 rounded-full bg-[#4cc2ff] text-center text-[26px] leading-[38px] text-black">1</div>
      </div>
    </div>
  );
}

export default function App() {
  return (
    <div className="flex h-[2160px] w-[3840px] flex-col overflow-hidden bg-[#202020]">
      <TabStrip />
      <div className="h-[178px] bg-[#dde8db]">
        <AddressRow />
        <FavouritesRow />
      </div>
      <div className="flex h-[1782px]">
        <AccountApp />
        <Sidebar />
      </div>
      <Taskbar />
    </div>
  );
}
